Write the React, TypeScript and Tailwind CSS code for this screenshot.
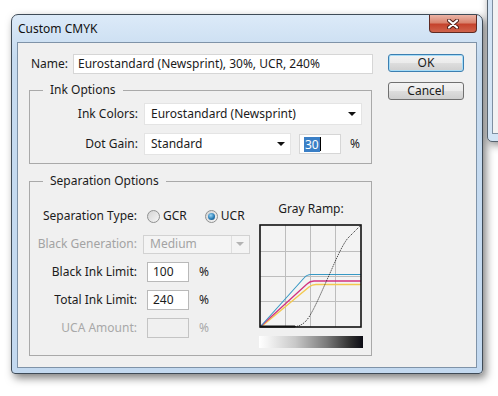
import { type ReactNode } from "react";

function Arrow({ disabled }: { disabled?: boolean }) {
  return (
    <span
      className={
        "h-0 w-0 border-x-[4px] border-t-[4px] border-x-transparent " +
        (disabled ? "border-t-[#b4b4b4]" : "border-t-[#111]")
      }
    />
  );
}

function Select({
  value,
  className,
  disabled,
}: {
  value: string;
  className: string;
  disabled?: boolean;
}) {
  return (
    <div
      className={
        "flex items-center justify-between pl-[6px] pr-[5px] " +
        (disabled
          ? "border border-[#d2d2d2] bg-[#f4f4f4] text-[#a3a3a3] "
          : "border border-[#e4e4e4] bg-white ") +
        className
      }
    >
      <span>{value}</span>
      {disabled ? (
        <div className="flex h-full items-center gap-[4px]">
          <span className="h-full w-px bg-[#dedede]" />
          <Arrow disabled />
        </div>
      ) : (
        <Arrow />
      )}
    </div>
  );
}

function Group({ title, className, children }: { title: string; className: string; children: ReactNode }) {
  return (
    <div className={"relative border border-[#a9a9a9] " + className}>
      <span className="absolute left-[13px] top-[-10px] bg-[#f0f0f0] px-[7px] leading-[18px]">{title}</span>
      {children}
    </div>
  );
}

function Radio({ label, checked }: { label: string; checked?: boolean }) {
  return (
    <div className="flex items-center gap-[3px]">
      <span className="flex h-[13px] w-[13px] items-center justify-center rounded-full border border-[#8f9090] bg-[linear-gradient(135deg,#d4d4d4,#f6f6f6)]">
        {checked ? (
          <span className="h-[7px] w-[7px] rounded-full bg-[radial-gradient(circle_at_40%_35%,#9bd7f7,#2a7cb5_55%,#0f4570)]" />
        ) : null}
      </span>
      <span>{label}</span>
    </div>
  );
}

function Button({ label, primary }: { label: string; primary?: boolean }) {
  return (
    <div
      className={
        "flex h-[18px] w-[76px] items-center justify-center rounded-[3px] border bg-[linear-gradient(180deg,#f3f3f3,#ebebeb_48%,#dddddd_52%,#cfcfcf)] " +
        (primary ? "border-[#3c7fb1] shadow-[inset_0_0_0_1px_#a6dcf7]" : "border-[#707070]")
      }
    >
      {label}
    </div>
  );
}

function GrayRamp() {
  return (
    <svg width="104" height="104" viewBox="0 0 104 104">
      <rect x="0" y="0" width="104" height="104" fill="#f0f0f0" />
      <rect x="1" y="1" width="101" height="102" fill="#f3f3f3" />
      {[26.5, 51.5, 76.5].map(v => (
        <line key={"v" + v} x1={v} y1="1" x2={v} y2="103" stroke="#bdbdbd" strokeWidth="1" />
      ))}
      {[27.5, 52.5, 77.5].map(v => (
        <line key={"h" + v} x1="1" y1={v} x2="102" y2={v} stroke="#bdbdbd" strokeWidth="1" />
      ))}
      <path d="M2.5,102.5 L50,63 Q53,60.5 57,60.5 L102,60.5" fill="none" stroke="#f3c94f" strokeWidth="1.4" />
      <path d="M1.5,102.5 L48,60 Q51,57 55,57 L102,57" fill="none" stroke="#d2337f" strokeWidth="1.3" />
      <path d="M1.5,102.5 L45,54 Q48,50.5 52,50.5 L102,50.5" fill="none" stroke="#3798c4" strokeWidth="1.1" />
      <rect x="1" y="1" width="101" height="102" fill="none" stroke="#111" strokeWidth="1.6" />
      <path d="M1,102.5 L36,102.5" fill="none" stroke="#111" strokeWidth="2" />
      <path
        d="M36,102.5 C42,102 46,99 50,93 C57,82 65,62 72,47 C78,33 84,20 89,14 C94,9 98,5 101.5,1.5"
        fill="none"
        stroke="#111"
        strokeWidth="1"
        strokeDasharray="1 1.2"
      />
    </svg>
  );
}

export default function App() {
  return (
    <div className="relative h-[396px] w-[498px] overflow-hidden bg-white font-['Noto_Sans',sans-serif] text-[12px] text-[#1b1b1b]">
      {/* window behind the dialog */}
      <div className="absolute left-[487px] top-[-8px] h-[150px] w-[24px] rounded-bl-[5px] border border-[#56636f] bg-[#d3e4f5] shadow-[2px_3px_8px_rgba(0,0,0,0.45)]">
        <div className="ml-[4px] h-[141px] border-b border-l border-[#7e8fa1] bg-[#f2f2f2]" />
      </div>

      <div className="ml-[11px] mt-[14px] flex h-[360px] w-[472px] flex-col rounded-b-[4px] rounded-t-[7px] border border-[#3f4b57] bg-[linear-gradient(180deg,#dceaf8,#c6dbf0_12%,#c3d9f0)] px-[5px] pb-[5px] shadow-[3px_4px_9px_rgba(0,0,0,0.5)]">
        <div className="flex h-[27px] justify-between">
          <span className="self-center pl-[1px] pt-[1px] text-[12px] text-[#111]">Custom CMYK</span>
          <div className="flex h-[18px] w-[48px] items-center justify-center rounded-b-[4px] border border-t-0 border-[#5f2a22] bg-[linear-gradient(180deg,#ebb4a6,#d9846f_45%,#c5432d_55%,#d0644c)]">
            <svg width="12" height="10" viewBox="0 0 12 10">
              <path d="M2,1.5 L10,8.5 M10,1.5 L2,8.5" stroke="#4a1a14" strokeWidth="4" strokeLinecap="round" />
              <path d="M2,1.5 L10,8.5 M10,1.5 L2,8.5" stroke="#fff" strokeWidth="2.2" strokeLinecap="round" />
            </svg>
          </div>
        </div>

        <div className="flex flex-1 border border-[#7f93a8] bg-[#f0f0f0] pl-[11px] pt-[11px]">
          <div className="flex w-[344px] flex-col">
            <div className="flex h-[20px] items-center">
              <span className="w-[44px] pr-[5px] text-right">Name:</span>
              <div className="flex h-[20px] w-[300px] items-center border border-[#d6d6d6] bg-white pl-[4px]">
                Eurostandard (Newsprint), 30%, UCR, 240%
              </div>
            </div>

            <Group title="Ink Options" className="mt-[16px] h-[74px] w-[343px] pt-[12px]">
              <div className="flex h-[22px] items-center">
                <span className="w-[114px] pr-[6px] text-right">Ink Colors:</span>
                <Select value="Eurostandard (Newsprint)" className="h-[22px] w-[218px]" />
              </div>
              <div className="mt-[8px] flex h-[22px] items-center">
                <span className="w-[114px] pr-[6px] text-right">Dot Gain:</span>
                <Select value="Standard" className="h-[22px] w-[147px]" />
                <div className="ml-[8px] flex h-[20px] w-[42px] items-center border border-[#d6d6d6] bg-white pl-[4px]">
                  <span className="bg-[#3a7fc6] px-px leading-[15px] text-white">30</span>
                  <span className="h-[14px] w-px bg-black" />
                </div>
                <span className="ml-[9px]">%</span>
              </div>
            </Group>

            <Group title="Separation Options" className="mt-[17px] flex h-[175px] w-[343px]">
              <div className="flex w-[229px] flex-col gap-[8px] pt-[24px]">
                <div className="flex h-[20px] items-center">
                  <span className="w-[113px] pr-[6px] text-right">Separation Type:</span>
                  <div className="ml-[4px] flex items-center gap-[18px]">
                    <Radio label="GCR" />
                    <Radio label="UCR" checked />
                  </div>
                </div>
                <div className="flex h-[20px] items-center">
                  <span className="w-[113px] pr-[6px] text-right text-[#a3a3a3]">Black Generation:</span>
                  <Select value="Medium" className="h-[19px] w-[107px]" disabled />
                </div>
                <div className="flex h-[20px] items-center">
                  <span className="w-[113px] pr-[6px] text-right">Black Ink Limit:</span>
                  <div className="ml-[4px] flex h-[20px] w-[42px] items-center border border-[#b9b9b9] bg-white pl-[5px]">100</div>
                  <span className="ml-[10px]">%</span>
                </div>
                <div className="flex h-[20px] items-center">
                  <span className="w-[113px] pr-[6px] text-right">Total Ink Limit:</span>
                  <div className="ml-[4px] flex h-[20px] w-[42px] items-center border border-[#b9b9b9] bg-white pl-[5px]">240</div>
                  <span className="ml-[10px]">%</span>
                </div>
                <div className="flex h-[20px] items-center text-[#a8a8a8]">
                  <span className="w-[113px] pr-[6px] text-right">UCA Amount:</span>
                  <div className="ml-[4px] h-[20px] w-[42px] border border-[#c4c4c4] bg-[#f0f0f0]" />
                  <span className="ml-[10px]">%</span>
                </div>
              </div>
              <div className="flex w-[104px] flex-col items-center pt-[19px]">
                <span className="leading-[16px]">Gray Ramp:</span>
                <div className="mt-[7px]">
                  <GrayRamp />
                </div>
                <div className="mt-[8px] h-[12px] w-[104px] bg-[linear-gradient(90deg,#ffffff,#f4f4f4_8%,#c8c8c8_35%,#7a7a7a_65%,#2e2e2e_88%,#0c0c14)]" />
              </div>
            </Group>
          </div>

          <div className="ml-[15px] flex flex-col gap-[10px]">
            <Button label="OK" primary />
            <Button label="Cancel" />
          </div>
        </div>
      </div>
    </div>
  );
}
